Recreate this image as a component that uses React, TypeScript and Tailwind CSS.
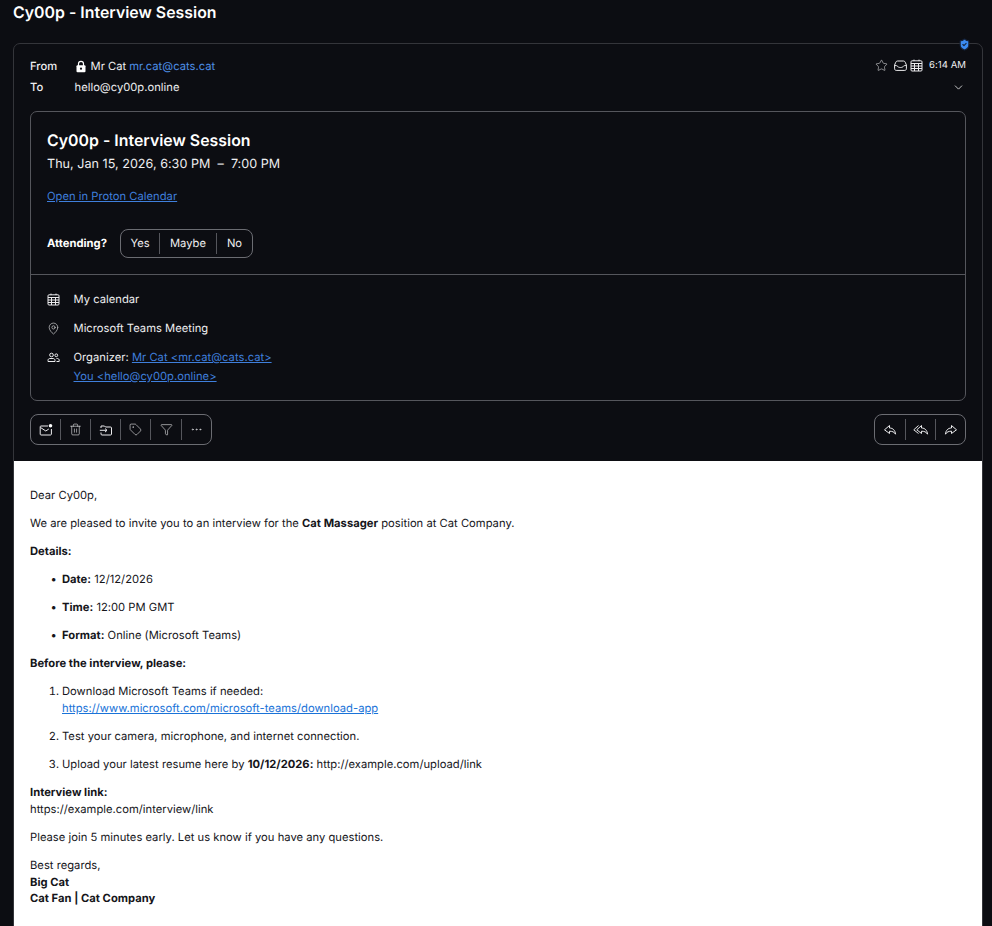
import {
  Filter,
  MapPin,
  ShieldCheck,
  Star,
  Tag,
  Trash2,
  ChevronDown,
  Ellipsis,
} from "lucide-react";

const stroke = "#ececee";

function Divider() {
  return <span className="h-[21px] w-px bg-[#55565c]" />;
}

function ToolButton({ children, className = "w-[29px]" }: { children: React.ReactNode; className?: string }) {
  return <span className={`flex h-full items-center justify-center ${className}`}>{children}</span>;
}

function LockIcon() {
  return (
    <svg width="12" height="13" viewBox="0 0 12 13" className="mr-[4px]">
      <path d="M3.500 6V3.800a2.500 2.500 0 0 1 5 0V6" fill="none" stroke="#fff" strokeWidth="1.200" />
      <rect x="1.500" y="5.200" width="9" height="7" rx="1" fill="#fff" />
      <circle cx="6" cy="8.700" r="1.100" fill="#0c0d12" />
    </svg>
  );
}

function InboxIcon() {
  return (
    <svg width="13" height="13" viewBox="0 0 13 13" fill="none" stroke={stroke} strokeWidth="1">
      <path d="M3.500 2h6c.8 0 1.400.5 1.700 1.200L12.400 6v3.800c0 .9-.7 1.600-1.600 1.600H2.200c-.9 0-1.600-.7-1.600-1.600V6l1.200-2.800C2.100 2.500 2.700 2 3.500 2z" />
      <path d="M.8 6.500c1.500 0 2.500.2 3 1 .4.600 1.500 1 2.700 1s2.300-.4 2.700-1c.5-.8 1.500-1 3-1" />
    </svg>
  );
}

function CalendarGrid({ size = 13 }: { size?: number }) {
  return (
    <svg width={size} height={size} viewBox="0 0 13 13" fill="none" stroke={stroke} strokeWidth="1">
      <rect x="1" y="1.800" width="11" height="10.200" rx="1" />
      <path d="M1 4.500h11M1 7h11M1 9.500h11M4.500 4.500V12M8.500 4.500V12M4 .6v1.500M9 .6v1.500" />
    </svg>
  );
}

function PeopleIcon() {
  return (
    <svg width="13" height="13" viewBox="0 0 13 13" fill="none" stroke={stroke} strokeWidth="1">
      <circle cx="4.500" cy="4" r="1.800" />
      <circle cx="9.300" cy="4.300" r="1.400" />
      <path d="M1 10.500V9.300c0-1 .8-1.800 1.800-1.800h3.400c1 0 1.800.8 1.800 1.800v1.200zM9.500 7.500h1c.9 0 1.700.8 1.700 1.700v1.300H9.500" />
    </svg>
  );
}

function MailDot() {
  return (
    <svg width="14" height="14" viewBox="0 0 14 14" fill="none" stroke={stroke} strokeWidth="1">
      <path d="M9 3H2a.8.8 0 0 0-.8.8v7.400c0 .4.4.8.8.8h9.600c.4 0 .8-.4.8-.8V6" />
      <path d="M1.500 4.500 6.800 8l3-2" />
      <circle cx="11.500" cy="2.800" r="1.800" fill="#fff" stroke="none" />
    </svg>
  );
}

function MoveFolder() {
  return (
    <svg width="14" height="14" viewBox="0 0 14 14" fill="none" stroke={stroke} strokeWidth="1">
      <path d="M2 5V3h3.500l1 1h5a1 1 0 0 1 1 1v6a1 1 0 0 1-1 1H3a1 1 0 0 1-1-1V9.500" />
      <path d="M.8 7.300h7M6 5.500l2 1.800-2 1.800" />
    </svg>
  );
}

function ReplyIcon() {
  return (
    <svg width="14" height="14" viewBox="0 0 14 14" fill="none" stroke={stroke} strokeWidth="1" strokeLinejoin="round">
      <path d="M6.500 2.500 1.500 6.800 6.500 10.500V8.200c2.500 0 4.800.6 6 3C12.300 7.500 10 5 6.500 5z" />
    </svg>
  );
}

function ReplyAllIcon() {
  return (
    <svg width="16" height="14" viewBox="0 0 16 14" fill="none" stroke={stroke} strokeWidth="1" strokeLinejoin="round">
      <path d="M8.500 2.500 3.800 6.800 8.500 10.500V8.200c2.500 0 4.800.6 6 3C14.300 7.500 12 5 8.500 5z" />
      <path d="M5.500 2.500.8 6.800 5.500 10.500" />
    </svg>
  );
}

function ForwardIcon() {
  return (
    <svg width="14" height="14" viewBox="0 0 14 14" fill="none" stroke={stroke} strokeWidth="1" strokeLinejoin="round">
      <path d="M7.500 2.500 12.500 6.800 7.500 10.500V8.200c-2.500 0-4.800.6-6 3C1.700 7.500 4 5 7.500 5z" />
    </svg>
  );
}

function DetailRow({ icon, children }: { icon: React.ReactNode; children: React.ReactNode }) {
  return (
    <div className="flex">
      <span className="flex h-[19px] w-[26.5px] shrink-0 items-center">{icon}</span>
      <div className="leading-[19px]">{children}</div>
    </div>
  );
}

function Bullet({ children }: { children: React.ReactNode }) {
  return <li className="relative before:absolute before:-left-[11px] before:font-bold before:content-['•']">{children}</li>;
}

export default function App() {
  return (
    <div
      className="h-[926px] overflow-hidden bg-[#0c0d12] text-[11.2px] tracking-[0.02px] text-[#eeeef0] [text-rendering:geometricPrecision]"
      style={{ fontFamily: "Inter, 'Liberation Sans', sans-serif" }}
    >
      <h1 className="h-[43px] pl-[13px] pt-[3px] text-[15.85px] leading-[19px] font-semibold text-white">
        Cy00p - Interview Session
      </h1>

      <div className="relative mx-[13px] mr-[9px] h-[900px] rounded-t-[7px] border border-[#34353a]">
        <ShieldCheck className="absolute -top-[6px] right-[11px] size-[13px] fill-[#3b8bf2] text-[#16233c]" strokeWidth={2} />

        <div className="px-4 pt-[14px]">
          <div className="flex h-[16px] items-center">
            <span className="w-[44.5px] font-medium">From</span>
            <LockIcon />
            <span>Mr Cat</span>
            <span className="ml-[3px] text-[#4d8fe6]">mr.cat@cats.cat</span>
            <div className="ml-auto flex items-center gap-[3px]">
              <Star className="mr-[3px] size-[13px] text-[#ececee]" strokeWidth={1} />
              <InboxIcon />
              <CalendarGrid />
              <span className="ml-[3px] text-[9.6px]">6:14 AM</span>
            </div>
          </div>
          <div className="mt-[5px] flex h-[16px] items-center">
            <span className="w-[44.5px] font-medium">To</span>
            <span>hello@cy00p.online</span>
            <ChevronDown className="mr-[1px] ml-auto size-[13px] text-[#ececee]" strokeWidth={1.500} />
          </div>

          <div className="mt-[16px] h-[290px] rounded-[7px] border border-[#55565c]">
            <div className="h-[162px] px-4 pt-[19px]">
              <h2 className="text-[15.85px] leading-[20px] font-semibold text-white">Cy00p - Interview Session</h2>
              <p className="mt-[5px] text-[12.58px] leading-[18px]">Thu, Jan 15, 2026, 6:30 PM&nbsp; –&nbsp; 7:00 PM</p>
              <a className="mt-[15px] block leading-[14px] text-[#3f7fdc] underline">Open in Proton Calendar</a>
              <div className="mt-[26px] flex items-center">
                <span className="w-[73px] font-[650] text-white">Attending?</span>
                <div className="flex h-[29px] items-center rounded-[8px] border border-[#6b6c72]">
                  <ToolButton className="w-[38px]">Yes</ToolButton>
                  <Divider />
                  <ToolButton className="w-[56px]">Maybe</ToolButton>
                  <Divider />
                  <ToolButton className="w-[35px]">No</ToolButton>
                </div>
              </div>
            </div>
            <div className="flex flex-col gap-[10px] border-t border-[#55565c] px-4 pt-[15px]">
              <DetailRow icon={<CalendarGrid />}>My calendar</DetailRow>
              <DetailRow icon={<MapPin className="size-[13px]" strokeWidth={1.100} />}>Microsoft Teams Meeting</DetailRow>
              <DetailRow icon={<PeopleIcon />}>
                <div>
                  Organizer: <a className="text-[#3f7fdc] underline">Mr Cat &lt;mr.cat@cats.cat&gt;</a>
                </div>
                <a className="text-[#3f7fdc] underline">You &lt;hello@cy00p.online&gt;</a>
              </DetailRow>
            </div>
          </div>

          <div className="mt-[13px] flex justify-between">
            <div className="flex h-[31px] items-center rounded-[8px] border border-[#6b6c72]">
              <ToolButton><MailDot /></ToolButton>
              <Divider />
              <ToolButton><Trash2 className="size-[13px] text-[#ececee]" strokeWidth={1.100} /></ToolButton>
              <Divider />
              <ToolButton><MoveFolder /></ToolButton>
              <Divider />
              <ToolButton><Tag className="size-[13px] text-[#ececee]" strokeWidth={1.100} /></ToolButton>
              <Divider />
              <ToolButton className="w-[30px]"><Filter className="size-[13px] text-[#ececee]" strokeWidth={1.100} /></ToolButton>
              <Divider />
              <ToolButton><Ellipsis className="size-[13px] text-[#ececee]" strokeWidth={1.100} /></ToolButton>
            </div>
            <div className="flex h-[31px] items-center rounded-[8px] border border-[#6b6c72]">
              <ToolButton className="w-[30px]"><ReplyIcon /></ToolButton>
              <Divider />
              <ToolButton><ReplyAllIcon /></ToolButton>
              <Divider />
              <ToolButton><ForwardIcon /></ToolButton>
            </div>
          </div>
        </div>

        <div className="mt-[16px] h-[480px] bg-white px-4 pt-[26px] leading-[17px] text-[#15151a]">
          <p>Dear Cy00p,</p>
          <p className="mt-[11px]">
            We are pleased to invite you to an interview for the <b className="font-[650]">Cat Massager</b> position at Cat Company.
          </p>
          <p className="mt-[11px] font-[650]">Details:</p>
          <ul className="mt-[11px] flex flex-col gap-[11px] pl-8">
            <Bullet><b className="font-[650]">Date:</b> 12/12/2026</Bullet>
            <Bullet><b className="font-[650]">Time:</b> 12:00 PM GMT</Bullet>
            <Bullet><b className="font-[650]">Format:</b> Online (Microsoft Teams)</Bullet>
          </ul>
          <p className="mt-[11px] font-[650]">Before the interview, please:</p>
          <ol className="mt-[11px] flex list-decimal flex-col gap-[11px] pl-8">
            <li>
              Download Microsoft Teams if needed:
              <br />
              <a className="text-[#1a73d8] underline">https://www.microsoft.com/microsoft-teams/download-app</a>
            </li>
            <li>Test your camera, microphone, and internet connection.</li>
            <li>
              Upload your latest resume here by <b className="font-[650]">10/12/2026:</b> http://example.com/upload/link
            </li>
          </ol>
          <p className="mt-[11px]">
            <b className="font-[650]">Interview link:</b>
            <br />
            https://example.com/interview/link
          </p>
          <p className="mt-[11px]">Please join 5 minutes early. Let us know if you have any questions.</p>
          <p className="mt-[11px] leading-[16.5px]">
            Best regards,
            <br />
            <b className="font-[650]">Big Cat</b>
            <br />
            <b className="font-[650]">Cat Fan | Cat Company</b>
          </p>
        </div>
      </div>
    </div>
  );
}
